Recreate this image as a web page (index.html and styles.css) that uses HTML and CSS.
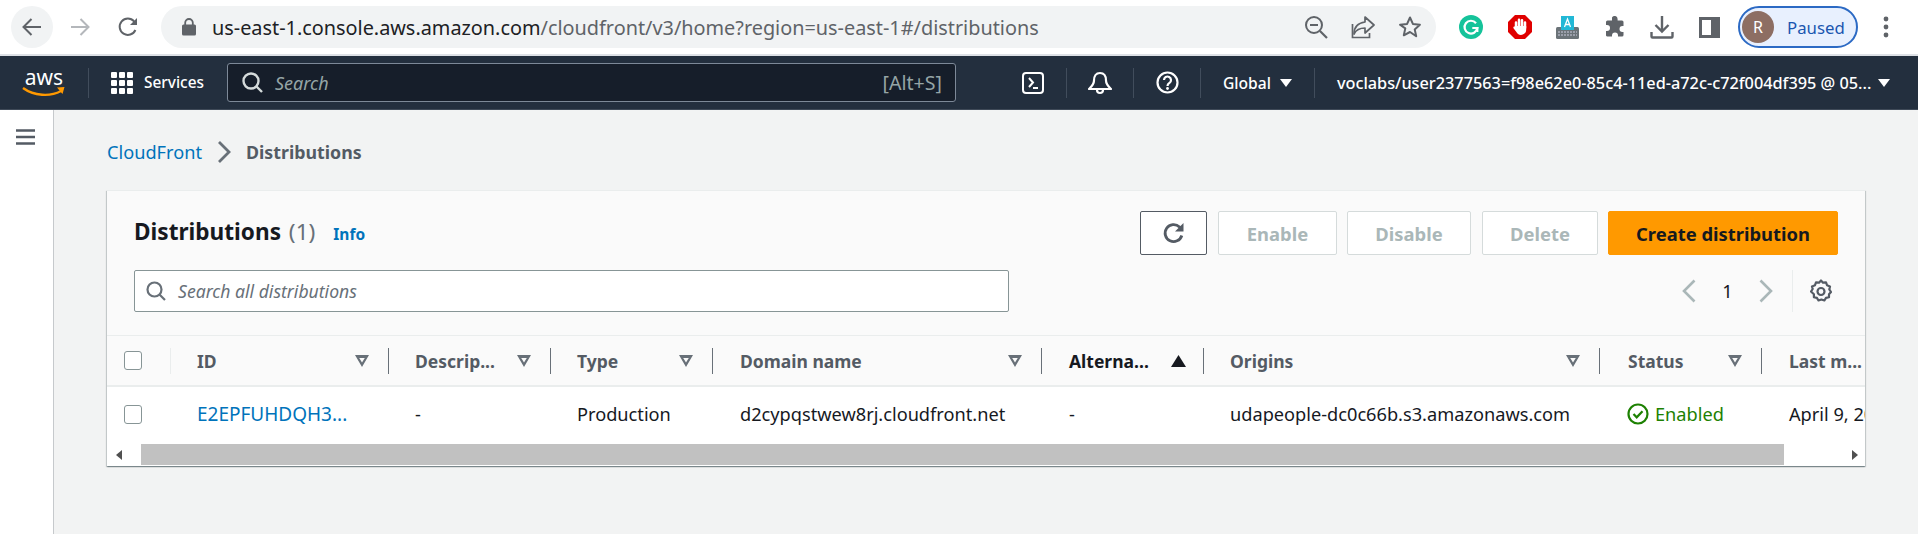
FILE: index.html
```html
<!DOCTYPE html>
<html lang="en">
<head>
<meta charset="utf-8">
<title>CloudFront Distributions</title>
<link rel="stylesheet" href="styles.css">
</head>
<body>
<header class="browser">
  <div class="nav-btns">
    <button class="round back"><svg width="22" height="22" viewBox="0 0 22 22"><path d="M20 11H3M10.5 3L2.5 11l8 8" fill="none" stroke="#5f6368" stroke-width="2"/></svg></button>
    <button class="round"><svg width="22" height="22" viewBox="0 0 22 22"><path d="M2 11h17M11.5 3l8 8-8 8" fill="none" stroke="#b4b7bb" stroke-width="2"/></svg></button>
    <button class="round"><svg width="24" height="24" viewBox="0 0 24 24"><path d="M19.4 15a8.2 8.2 0 1 1-1.3-8.6L20 8.5" fill="none" stroke="#5f6368" stroke-width="2"/><path d="M21 3v7h-7z" fill="#5f6368"/></svg></button>
  </div>
  <div class="omnibox">
    <svg class="lock" width="14" height="18" viewBox="0 0 14 18"><path d="M3.2 7V4.8a3.8 3.8 0 0 1 7.6 0V7" fill="none" stroke="#5f6368" stroke-width="1.8"/><rect y="6.5" width="14" height="11" rx="1.5" fill="#5f6368"/></svg>
    <span class="url">us-east-1.console.aws.amazon.com<span class="url-dim">/cloudfront/v3/home?region=us-east-1#/distributions</span></span>
    <div class="omni-icons">
      <svg width="24" height="24" viewBox="0 0 24 24"><circle cx="10" cy="10" r="8" fill="none" stroke="#5f6368" stroke-width="2"/><path d="M16 16l7 7" stroke="#5f6368" stroke-width="2.2"/><path d="M6 10h8" stroke="#5f6368" stroke-width="2"/></svg>
      <svg width="24" height="24" viewBox="0 0 24 24"><path d="M14 2l9 8-9 8v-5c-6 0-9 2-11 6 0-7 4-11 11-12z" fill="none" stroke="#5f6368" stroke-width="1.7" stroke-linejoin="round"/><path d="M1.5 9v13.5h17V18" fill="none" stroke="#5f6368" stroke-width="1.7"/></svg>
      <svg width="24" height="24" viewBox="0 0 24 24"><path d="M12 2.5l2.9 6.4 7 .8-5.2 4.7 1.5 6.9L12 17l-6.2 3.3 1.5-6.900L2 9.700l7.100-.8z" fill="none" stroke="#5f6368" stroke-width="2" stroke-linejoin="round"/></svg>
    </div>
  </div>
  <div class="extensions">
    <svg width="24" height="24" viewBox="0 0 24 24"><circle cx="12" cy="12" r="12" fill="#15c39a"/><path d="M17 8.200A6.400 6.400 0 1 0 18.300 13h-5" fill="none" stroke="#fff" stroke-width="2.200"/><path d="M18.500 12v5" stroke="#fff" stroke-width="1.800"/></svg>
    <svg width="24" height="24" viewBox="0 0 24 24"><path d="M7 0h10l7 7v10l-7 7H7l-7-7V7z" fill="#e00000"/><path d="M8 12V7.500M11 12V4.800M14 12V5.200M17 13V7.500" stroke="#fff" stroke-width="2.500" stroke-linecap="round"/><path d="M6.800 11h11.400v3.500c0 3-2 5.500-5.200 5.500-2.600 0-3.700-1.300-4.800-3.200l-2.700-3.600c-.7-1.200.8-2.400 1.800-1.400z" fill="#fff"/></svg>
    <svg width="23" height="23" viewBox="0 0 23 23"><rect y="11" width="23" height="12" rx="1.500" fill="#6b7378"/><path d="M2 16h19M2 19h19" stroke="#ccd" stroke-width="1" stroke-dasharray="2 1"/><rect x="5" width="13" height="14" fill="#22b8d6"/><path d="M8.500 11l3-8 3 8M9.500 8.500h4" fill="none" stroke="#fff" stroke-width="1.300"/></svg>
    <svg width="22" height="22" viewBox="0 0 22 22"><path d="M8 1.500a3 3 0 0 1 5.600 1.500v1.500H18a1.500 1.500 0 0 1 1.500 1.500v4h-1a3 3 0 1 0 0 6h1v3a1.500 1.500 0 0 1-1.500 1.500h-4v-1a3 3 0 1 0-6 0v1H3.500A1.500 1.500 0 0 1 2 19.500V15h1a3 3 0 1 0 0-6H2V6a1.500 1.500 0 0 1 1.500-1.500H8z" fill="#5f6368"/></svg>
    <svg width="24" height="24" viewBox="0 0 24 24"><path d="M12 1v15M5.500 10l6.500 6.500 6.500-6.500" fill="none" stroke="#5f6368" stroke-width="2.400"/><path d="M1.500 17v4.500a1 1 0 0 0 1 1h19a1 1 0 0 0 1-1V17" fill="none" stroke="#5f6368" stroke-width="2.400"/></svg>
    <svg width="21" height="21" viewBox="0 0 21 21"><path d="M0 0h21v21H0z" fill="#5f6368"/><path d="M3 3h9v15H3z" fill="#fff"/></svg>
  </div>
  <div class="profile"><span class="avatar">R</span><span class="paused">Paused</span></div>
  <svg class="kebab" width="6" height="22" viewBox="0 0 6 22"><circle cx="3" cy="3" r="2.400" fill="#5f6368"/><circle cx="3" cy="11" r="2.400" fill="#5f6368"/><circle cx="3" cy="19" r="2.400" fill="#5f6368"/></svg>
</header>

<nav class="console">
  <div class="logo"><span class="logo-text">aws</span><svg width="44" height="11" viewBox="0 0 44 11"><path d="M1 2c11 8 27 9 38 3" fill="none" stroke="#f90" stroke-width="2.400"/><path d="M35 1.500l7.500-.5-2 7z" fill="#f90"/></svg></div>
  <i class="nav-sep sep-logo"></i>
  <div class="services">
    <svg width="22" height="22" viewBox="0 0 22 22" fill="#fff"><rect width="6" height="6" rx="1"/><rect x="8" width="6" height="6" rx="1"/><rect x="16" width="6" height="6" rx="1"/><rect y="8" width="6" height="6" rx="1"/><rect x="8" y="8" width="6" height="6" rx="1"/><rect x="16" y="8" width="6" height="6" rx="1"/><rect y="16" width="6" height="6" rx="1"/><rect x="8" y="16" width="6" height="6" rx="1"/><rect x="16" y="16" width="6" height="6" rx="1"/></svg>
    <span>Services</span>
  </div>
  <div class="global-search">
    <svg width="21" height="21" viewBox="0 0 21 21"><circle cx="9" cy="9" r="7.500" fill="none" stroke="#d5dbdb" stroke-width="2.400"/><path d="M14 14l6 6" stroke="#d5dbdb" stroke-width="2.400"/></svg>
    <span class="gs-text">Search</span>
    <span class="gs-key">[Alt+S]</span>
  </div>
  <div class="nav-right">
    <svg class="ni-term" width="22" height="22" viewBox="0 0 22 22"><rect x="1" y="1" width="20" height="20" rx="3" fill="none" stroke="#fff" stroke-width="2"/><path d="M7 6l4 4.500-4 4.500M11 16h5" fill="none" stroke="#fff" stroke-width="2"/></svg>
    <i class="nav-sep"></i>
    <svg class="ni-bell" width="24" height="24" viewBox="0 0 24 24"><path d="M12 2c4 0 6 3 6 7.500 0 4 2.500 6 5 8.500H1c2.500-2.500 5-4.500 5-8.500C6 5 8 2 12 2z" fill="none" stroke="#fff" stroke-width="2.200" stroke-linejoin="round"/><path d="M9 19a3 3 0 0 0 6 0" fill="none" stroke="#fff" stroke-width="2.200"/></svg>
    <i class="nav-sep"></i>
    <svg class="ni-help" width="23" height="23" viewBox="0 0 23 23"><circle cx="11.500" cy="11.500" r="10" fill="none" stroke="#fff" stroke-width="2.200"/><path d="M8 9a3.500 3.500 0 1 1 5.500 2.900c-1.300.9-2 1.500-2 3" fill="none" stroke="#fff" stroke-width="2.200"/><circle cx="11.500" cy="17.500" r="1.400" fill="#fff"/></svg>
    <i class="nav-sep"></i>
    <span class="nav-label global">Global</span><span class="caret"></span>
    <i class="nav-sep"></i>
    <span class="nav-label user">voclabs/user2377563=f98e62e0-85c4-11ed-a72c-c72f004df395 @ 05...</span><span class="caret caret-end"></span>
  </div>
</nav>

<div class="layout">
  <aside class="sidebar">
    <svg width="19" height="16" viewBox="0 0 19 16"><path d="M0 1.500h19M0 8h19M0 14.500h19" stroke="#545b64" stroke-width="2.600"/></svg>
  </aside>
  <main class="content">
    <div class="crumbs">
      <a class="crumb-link">CloudFront</a>
      <svg width="14" height="22" viewBox="0 0 14 22"><path d="M2 1l10 10-10 10" fill="none" stroke="#687078" stroke-width="2.800"/></svg>
      <span class="crumb-current">Distributions</span>
    </div>
    <section class="card">
      <div class="card-head">
        <div class="head-left">
          <div class="title-row">
            <h1 class="title">Distributions <span class="count">(1)</span></h1>
            <a class="info">Info</a>
          </div>
          <div class="filter">
            <svg width="20" height="20" viewBox="0 0 20 20"><circle cx="8.500" cy="8.500" r="7" fill="none" stroke="#687078" stroke-width="2.200"/><path d="M13.500 13.500l5.500 5.500" stroke="#687078" stroke-width="2.200"/></svg>
            <span>Search all distributions</span>
          </div>
        </div>
        <div class="head-right">
          <div class="actions">
            <button class="btn btn-refresh"><svg width="24" height="24" viewBox="0 0 24 24"><path d="M19.800 14.500a8.500 8.500 0 1 1-2.300-8.600L19.500 8" fill="none" stroke="#545b64" stroke-width="2.800"/><path d="M21.500 2V10.500h-8.500z" fill="#545b64"/></svg></button>
            <button class="btn btn-off b-enable">Enable</button>
            <button class="btn btn-off b-disable">Disable</button>
            <button class="btn btn-off b-delete">Delete</button>
            <button class="btn btn-primary">Create distribution</button>
          </div>
          <div class="pager">
            <svg width="14" height="24" viewBox="0 0 14 24"><path d="M12.500 1.500L2 12l10.500 10.500" fill="none" stroke="#aab7b8" stroke-width="2.600"/></svg>
            <span class="page-num">1</span>
            <svg width="14" height="24" viewBox="0 0 14 24"><path d="M1.500 1.500L12 12 1.500 22.500" fill="none" stroke="#aab7b8" stroke-width="2.600"/></svg>
            <i class="pager-sep"></i>
            <svg width="22" height="24" viewBox="0 0 22 24"><path d="M11 1.500l2 2.200 3-.4 1 2.900 3 1.200-.7 3 1.700 2.600-2 2.200v3l-3 .7-1.600 2.600-3-1-2.900 1-1.600-2.600-3-.7v-3L1 12.500 2.700 10 2 7.400l3-1.200 1-2.900 3 .4z" fill="none" stroke="#545b64" stroke-width="2.200" stroke-linejoin="round"/><circle cx="11" cy="12.500" r="3.500" fill="none" stroke="#545b64" stroke-width="2.200"/></svg>
          </div>
        </div>
      </div>
      <div class="table">
        <div class="row row-head">
          <div class="cell c-check"><span class="check"></span><i class="faint"></i></div>
          <div class="cell c1"><span class="th">ID</span><span class="tri"></span><i class="col-sep"></i></div>
          <div class="cell c2"><span class="th">Descrip...</span><span class="tri"></span><i class="col-sep"></i></div>
          <div class="cell c2"><span class="th">Type</span><span class="tri"></span><i class="col-sep"></i></div>
          <div class="cell c3"><span class="th">Domain name</span><span class="tri"></span><i class="col-sep"></i></div>
          <div class="cell c2 alt"><span class="th th-on">Alterna...</span><span class="tri tri-on"></span><i class="col-sep"></i></div>
          <div class="cell c4"><span class="th">Origins</span><span class="tri"></span><i class="col-sep"></i></div>
          <div class="cell c2 status-col"><span class="th">Status</span><span class="tri"></span><i class="col-sep"></i></div>
          <div class="cell c5"><span class="th">Last m...</span></div>
        </div>
        <div class="row row-body">
          <div class="cell c-check"><span class="check"></span></div>
          <div class="cell c1"><a class="link">E2EPFUHDQH3...</a></div>
          <div class="cell c2">-</div>
          <div class="cell c2">Production</div>
          <div class="cell c3">d2cypqstwew8rj.cloudfront.net</div>
          <div class="cell c2 alt">-</div>
          <div class="cell c4">udapeople-dc0c66b.s3.amazonaws.com</div>
          <div class="cell c2 status"><svg width="22" height="22" viewBox="0 0 22 22"><circle cx="11" cy="11" r="9.500" fill="none" stroke="#1d8102" stroke-width="2.200"/><path d="M6.500 11l3.200 3.300 5.800-6" fill="none" stroke="#1d8102" stroke-width="2.200"/></svg><span>Enabled</span></div>
          <div class="cell c5">April 9, 2023</div>
        </div>
      </div>
      <div class="scrollbar">
        <span class="arrow arrow-l"></span>
        <span class="thumb"></span>
        <span class="arrow arrow-r"></span>
      </div>
    </section>
  </main>
</div>
</body>
</html>
```
FILE: styles.css
```css
* { box-sizing: border-box; }
html, body { margin: 0; height: 534px; overflow: hidden; }
body { font-family: "Noto Sans", "Open Sans", sans-serif; font-size: 18.2px; color: #16191f; background: #f2f3f3; display: flex; flex-direction: column; }
button { font-family: inherit; }
svg { display: block; flex: none; }

/* browser chrome */
.browser { height: 56px; flex: none; background: #fff; border-bottom: 2px solid #dee1e6; display: flex; align-items: center; padding-left: 11px; }
.nav-btns { display: flex; gap: 6px; }
.round { width: 42px; height: 42px; border: 0; border-radius: 50%; background: transparent; padding: 0; display: flex; align-items: center; justify-content: center; }
.round.back { background: #f1f3f4; }
.omnibox { margin-left: 12px; width: 1275px; height: 42px; border-radius: 21px; background: #f1f3f4; display: flex; align-items: center; padding-left: 21px; }
.lock { margin-right: 16px; }
.url { font-size: 19.85px; color: #202124; white-space: nowrap; }
.url-dim { color: #5f6368; }
.omni-icons { margin-left: auto; display: flex; gap: 23px; margin-right: 14px; }
.extensions { margin-left: 23px; display: flex; align-items: center; width: 279px; gap: 24.5px; }
.profile { width: 120px; height: 42px; border: 2px solid #2c6ac4; border-radius: 21px; background: #e8f0fe; display: flex; align-items: center; padding-left: 2px; }
.avatar { width: 32px; height: 32px; border-radius: 50%; background: #8d6e63; color: #fff; font-size: 16px; display: flex; align-items: center; justify-content: center; }
.paused { margin-left: 13px; color: #1a56b0; font-size: 16.8px; }
.kebab { margin-left: 25px; }

/* console nav */
.console { height: 54px; flex: none; background: #232f3e; border-bottom: 1px solid #3f4a58; display: flex; align-items: center; padding-left: 23px; color: #fff; }
.logo { width: 42px; position: relative; height: 30px; display: flex; flex-direction: column; align-items: center; }
.logo-text { font-size: 21px; line-height: 19px; height: 18px; color: #fff; }
.nav-sep { width: 1px; height: 30px; background: #414d5c; flex: none; }
.sep-logo { margin-left: 23px; }
.services { margin-left: 22px; display: flex; align-items: center; gap: 11px; font-size: 15.4px; font-weight: 500; width: 93px; }
.global-search { margin-left: 23px; width: 729px; height: 39px; background: #161e2a; border: 1px solid #7d8998; border-radius: 3px; display: flex; align-items: center; padding-left: 14px; padding-right: 13px; }
.gs-text { margin-left: 12px; font-style: italic; color: #95a5a6; font-size: 18px; }
.gs-key { margin-left: auto; color: #95a5a6; font-size: 19.6px; }
.nav-right { margin-left: 66px; display: flex; align-items: center; }
.ni-bell { margin: 0 21px; }
.ni-help { margin: 0 21px 0 22px; }
.ni-term { margin-right: 22px; }
.nav-label { font-size: 15.6px; font-weight: 500; white-space: nowrap; }
.global { margin-left: 22px; }
.user { margin-left: 22px; font-size: 16.3px; }
.caret { width: 0; height: 0; border: 6px solid transparent; border-top: 8px solid #fff; border-bottom: 0; margin-left: 9px; margin-right: 22px; flex: none; }
.caret-end { margin-left: 7px; margin-right: 0; }

/* layout */
.layout { flex: 1; display: flex; min-height: 0; }
.sidebar { width: 54px; flex: none; background: #fff; border-right: 1px solid #c6c9cc; padding: 19px 0 0 16px; }
.content { flex: 1; padding: 30px 53px 0 53px; min-width: 0; }
.crumbs { display: flex; align-items: center; gap: 15px; height: 24px; }
.crumb-link { color: #0073bb; }
.crumb-current { color: #545b64; font-weight: 700; font-size: 17.8px; }

/* card */
.card { margin-top: 26px; background: #fafafa; border-top: 1px solid #eaeded; box-shadow: 0 1px 1px 0 rgba(0,28,36,.3), 1px 1px 1px 0 rgba(0,28,36,.15), -1px 1px 1px 0 rgba(0,28,36,.15); }
.card-head { height: 145px; padding: 20px 27px 0 27px; display: flex; justify-content: space-between; border-bottom: 1px solid #eaeded; }
.title-row { display: flex; align-items: baseline; height: 44px; padding-top: 5px; }
.title { margin: 0; font-size: 22.6px; font-weight: 700; color: #16191f; }
.count { font-weight: 400; color: #687078; margin-left: 2px; }
.info { margin-left: 18px; font-size: 15.5px; font-weight: 700; color: #0073bb; }
.filter { margin-top: 15px; width: 875px; height: 42px; background: #fff; border: 1px solid #879596; border-radius: 2px; display: flex; align-items: center; padding-left: 11px; gap: 12px; font-style: italic; font-size: 17.6px; color: #687078; }
.head-right { display: flex; flex-direction: column; align-items: flex-end; }
.actions { display: flex; height: 44px; }
.btn { height: 44px; border: 1px solid #d5dbdb; background: #fff; border-radius: 2px; font-size: 18.4px; font-weight: 700; padding: 0; display: flex; align-items: center; justify-content: center; flex: none; }
.btn-refresh { width: 67px; border-color: #545b64; margin-right: 11px; }
.btn-off { color: #aab7b8; margin-right: 10px; }
.b-enable { width: 119px; }
.b-disable { width: 124px; margin-right: 11px; }
.b-delete { width: 116px; }
.btn-primary { width: 230px; background: #ff9900; border-color: #ff9900; color: #16191f; }
.pager { margin-top: 15px; height: 42px; display: flex; align-items: center; margin-right: 6px; }
.page-num { width: 63px; text-align: center; }
.pager-sep { width: 1px; height: 42px; background: #eaeded; margin: 0 17px 0 19px; }

/* table */
.table { overflow: hidden; }
.row { display: flex; width: 1900px; }
.row-head { height: 51px; border-bottom: 2px solid #eaeded; background: #fafafa; }
.row-body { height: 54px; background: #fff; }
.cell { position: relative; flex: none; display: flex; align-items: center; padding-left: 26px; padding-right: 20px; white-space: nowrap; }
.c-check { width: 64px; padding-left: 17px; padding-right: 0; }
.c1 { width: 218px; }
.c2 { width: 162px; }
.c3 { width: 329px; padding-left: 27px; }
.c4 { width: 396px; }
.c5 { width: 200px; padding-left: 27px; }
.alt { padding-left: 27px; }
.status-col { padding-left: 28px; }
.th { font-weight: 700; color: #545b64; font-size: 17.5px; }
.th-on { color: #16191f; }
.check { width: 18px; height: 19px; border: 1px solid #879596; border-radius: 3px; background: #fff; }
.faint { position: absolute; right: 0; top: 12px; height: 26px; width: 1px; background: #eaeded; }
.col-sep { position: absolute; right: 0; top: 12px; height: 26px; width: 1px; background: #687078; }
.tri { position: absolute; right: 20px; top: 19px; width: 14px; height: 12px; background: #687078; clip-path: polygon(0 0, 100% 0, 50% 100%, 0 0, 30% 24%, 50% 62%, 70% 24%, 30% 24%, 0 0); }
.tri-on { width: 15px; background: #16191f; clip-path: polygon(50% 0, 100% 100%, 0 100%); right: 18px; }
.link { color: #0073bb; font-size: 19px; }
.status { color: #1d8102; gap: 6px; padding-left: 27px; }

/* scrollbar */
.scrollbar { height: 25px; background: #fff; display: flex; align-items: center; padding-top: 2px; }
.arrow { width: 0; height: 0; border: 5px solid transparent; flex: none; }
.arrow-l { border-right: 6px solid #505050; border-left: 0; margin-left: 9px; }
.thumb { width: 1643px; height: 21px; background: #c1c1c1; margin-left: 19px; flex: none; }
.arrow-r { border-left: 6px solid #505050; border-right: 0; margin-left: 68px; }
```
